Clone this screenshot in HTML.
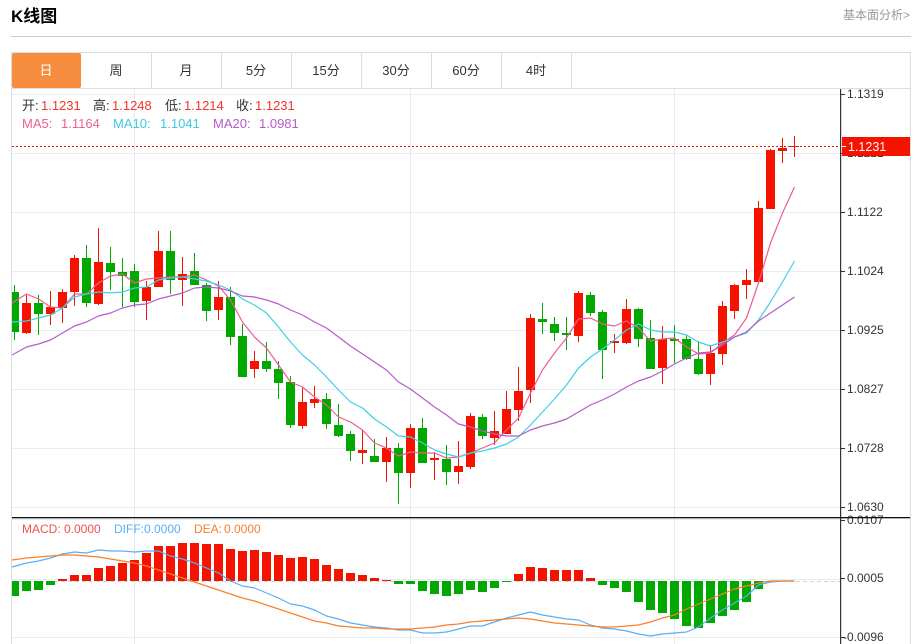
<!DOCTYPE html>
<html><head><meta charset="utf-8"><style>
html,body{margin:0;padding:0;background:#fff;width:921px;height:644px;overflow:hidden}
svg{display:block;font-family:"Liberation Sans","Noto Sans CJK SC",sans-serif}
</style></head><body>
<svg width="921" height="644" viewBox="0 0 921 644" xmlns="http://www.w3.org/2000/svg">
<defs><clipPath id="c"><rect x="12" y="89" width="828" height="555"/></clipPath></defs>
<text x="11" y="22" font-size="17" font-weight="bold" fill="#000">K线图</text>
<text x="910" y="19" font-size="12" fill="#999" text-anchor="end">基本面分析&gt;</text>
<rect x="11" y="36" width="900" height="1" fill="#ccc"/>
<g fill="none" stroke="#e6eef4">
<path d="M12 94.5H840M12 153.5H840M12 212.5H840M12 271.5H840M12 330.5H840M12 389.5H840M12 448.5H840M12 507.5H840M12 519.5H840M12 579.5H840M12 637.5H840"/>
<path d="M134.5 89V644M410.5 89V644M674.5 89V644" stroke="#e1ebf4"/>
</g>
<path d="M11.5 52V644M910.5 52V644M11 52.5H911M12 88.5H910" fill="none" stroke="#ddd"/>
<path d="M151.5 53V88M221.5 53V88M291.5 53V88M361.5 53V88M431.5 53V88M501.5 53V88M571.5 53V88" fill="none" stroke="#ddd"/>
<rect x="12" y="53" width="69" height="35" rx="2" fill="#f58c3e"/>
<g font-size="13" fill="#333" text-anchor="middle">
<text x="46" y="75" fill="#fff">日</text><text x="116" y="75">周</text><text x="186" y="75">月</text><text x="256" y="75">5分</text><text x="326" y="75">15分</text><text x="396" y="75">30分</text><text x="466" y="75">60分</text><text x="536" y="75">4时</text>
</g>
<g clip-path="url(#c)">
<g fill="none" stroke="#f51300">
<path d="M26.5 295V334M50.5 291V325M62.5 289V323M74.5 255V306M98.5 228V305M146.5 281V320M158.5 231V287M182.5 257V306M218.5 281V320M254.5 351V378M302.5 388V429M314.5 386V408M362.5 430V464M386.5 437V482M410.5 424V488M434.5 452V480M458.5 441V484M470.5 413V469M494.5 411V445M506.5 391V434M518.5 367V421M530.5 314V403M578.5 291V342M614.5 334V353M626.5 299V344M662.5 326V384M710.5 345V385M722.5 301V365M734.5 284V319M746.5 269V299M758.5 201V282M770.5 149V209M782.5 138V163M794.5 136V157"/>
</g>
<path fill="#f51300" d="M22 303h9v30h-9zM46 307h9v7h-9zM58 292h9v16h-9zM70 258h9v34h-9zM94 262h9v42h-9zM142 287h9v14h-9zM154 251h9v36h-9zM178 274h9v6h-9zM214 297h9v13h-9zM250 361h9v8h-9zM298 402h9v24h-9zM310 399h9v4h-9zM358 450h9v3h-9zM382 448h9v14h-9zM406 428h9v45h-9zM430 458h9v2h-9zM454 466h9v6h-9zM466 416h9v51h-9zM490 431h9v7h-9zM502 409h9v25h-9zM514 391h9v19h-9zM526 318h9v72h-9zM574 293h9v43h-9zM610 341h9v2h-9zM622 309h9v34h-9zM658 339h9v29h-9zM706 353h9v21h-9zM718 306h9v48h-9zM730 285h9v26h-9zM742 280h9v5h-9zM754 208h9v74h-9zM766 150h9v59h-9zM778 148h9v3h-9zM790 146h9v1h-9z"/>
<g fill="none" stroke="#00a800">
<path d="M14.5 285V340M38.5 295V335M86.5 245V307M110.5 247V290M122.5 258V307M134.5 264V307M170.5 231V294M194.5 253V285M206.5 283V321M230.5 287V345M242.5 324V377M266.5 342V372M278.5 361V399M290.5 376V428M326.5 393V429M338.5 404V437M350.5 431V461M374.5 439V462M398.5 443V504M422.5 418V463M446.5 445V485M482.5 414V439M542.5 303V334M554.5 317V341M566.5 317V350M590.5 292V316M602.5 310V379M638.5 308V347M650.5 320V369M674.5 325V363M686.5 335V360M698.5 341V375"/>
</g>
<path fill="#00a800" d="M10 292h9v40h-9zM34 303h9v11h-9zM82 258h9v45h-9zM106 263h9v9h-9zM118 272h9v4h-9zM130 271h9v31h-9zM166 251h9v29h-9zM190 271h9v14h-9zM202 285h9v26h-9zM226 297h9v40h-9zM238 336h9v41h-9zM262 361h9v8h-9zM274 369h9v14h-9zM286 382h9v43h-9zM322 399h9v25h-9zM334 425h9v11h-9zM346 434h9v17h-9zM370 456h9v6h-9zM394 448h9v25h-9zM418 428h9v35h-9zM442 459h9v13h-9zM478 417h9v19h-9zM538 319h9v3h-9zM550 324h9v9h-9zM562 333h9v2h-9zM586 295h9v18h-9zM598 312h9v38h-9zM634 309h9v30h-9zM646 338h9v31h-9zM670 339h9v2h-9zM682 339h9v20h-9zM694 359h9v15h-9z"/>
<g fill="none" stroke-width="1.2" stroke-linejoin="round">
<polyline stroke="#ef5b92" points="12,303 26.5,294 38.5,299 50.5,307 62.5,308 74.5,294 86.5,294 98.5,283 110.5,276 122.5,274 134.5,283 146.5,279 158.5,278 170.5,277 182.5,277 194.5,275 206.5,280 218.5,286 230.5,300 242.5,322 254.5,337 266.5,348 278.5,365 290.5,382 302.5,387 314.5,397 326.5,405 338.5,417 350.5,422 362.5,430 374.5,443 386.5,448 398.5,456 410.5,452 422.5,453 434.5,453 446.5,458 458.5,457 470.5,453 482.5,448 494.5,443 506.5,430 518.5,418 530.5,393 542.5,370 554.5,353 566.5,338 578.5,319 590.5,318 602.5,324 614.5,326 626.5,321 638.5,328 650.5,341 662.5,339 674.5,338 686.5,347 698.5,354 710.5,353 722.5,343 734.5,335 746.5,318 758.5,283 770.5,243 782.5,213 794.5,187"/>
<polyline stroke="#3fd0e4" points="12,322 26.5,321 38.5,318 50.5,315 62.5,308 74.5,297 86.5,294 98.5,292 110.5,293 122.5,292 134.5,288 146.5,287 158.5,280 170.5,278 182.5,277 194.5,279 206.5,281 218.5,285 230.5,290 242.5,299 254.5,305 266.5,313 278.5,327 290.5,342 302.5,355 314.5,365 326.5,377 338.5,390 350.5,402 362.5,408 374.5,419 386.5,427 398.5,436 410.5,437 422.5,443 434.5,450 446.5,454 458.5,457 470.5,453 482.5,451 494.5,448 506.5,444 518.5,437 530.5,425 542.5,412 554.5,399 566.5,385 578.5,368 590.5,357 602.5,349 614.5,340 626.5,330 638.5,324 650.5,330 662.5,332 674.5,332 686.5,335 698.5,342 710.5,346 722.5,342 734.5,337 746.5,333 758.5,320 770.5,302 782.5,282 794.5,261"/>
<polyline stroke="#b65bc9" points="12,355 26.5,347 38.5,344 50.5,340 62.5,333 74.5,326 86.5,322 98.5,316 110.5,313 122.5,308 134.5,305 146.5,304 158.5,299 170.5,296 182.5,293 194.5,288 206.5,287 218.5,288 230.5,291 242.5,296 254.5,297 266.5,300 278.5,304 290.5,310 302.5,315 314.5,322 326.5,328 338.5,337 350.5,346 362.5,354 374.5,362 386.5,370 398.5,382 410.5,389 422.5,398 434.5,407 446.5,415 458.5,424 470.5,427 482.5,431 494.5,434 506.5,436 518.5,436 530.5,430 542.5,426 554.5,423 566.5,419 578.5,412 590.5,405 602.5,400 614.5,394 626.5,387 638.5,381 650.5,377 662.5,371 674.5,364 686.5,358 698.5,353 710.5,352 722.5,345 734.5,337 746.5,332 758.5,321 770.5,313 782.5,305 794.5,297"/>
</g>
<path d="M12 581.5H840" fill="none" stroke="#b8dcee" stroke-dasharray="4 3"/>
<path fill="#f51300" d="M58 579h9v2h-9zM70 575h9v6h-9zM82 575h9v6h-9zM94 568h9v13h-9zM106 566h9v15h-9zM118 563h9v18h-9zM130 560h9v21h-9zM142 553h9v28h-9zM154 546h9v35h-9zM166 546h9v35h-9zM178 543h9v38h-9zM190 543h9v38h-9zM202 544h9v37h-9zM214 544h9v37h-9zM226 549h9v32h-9zM238 551h9v30h-9zM250 550h9v31h-9zM262 552h9v29h-9zM274 555h9v26h-9zM286 558h9v23h-9zM298 557h9v24h-9zM310 559h9v22h-9zM322 565h9v16h-9zM334 569h9v12h-9zM346 573h9v8h-9zM358 575h9v6h-9zM370 578h9v3h-9zM382 580h9v1h-9zM514 574h9v7h-9zM526 567h9v14h-9zM538 568h9v13h-9zM550 570h9v11h-9zM562 570h9v11h-9zM574 570h9v11h-9zM586 578h9v3h-9z"/>
<path fill="#00a800" d="M10 581h9v15h-9zM22 581h9v10h-9zM34 581h9v9h-9zM46 581h9v4h-9zM394 581h9v3h-9zM406 581h9v3h-9zM418 581h9v10h-9zM430 581h9v13h-9zM442 581h9v15h-9zM454 581h9v13h-9zM466 581h9v9h-9zM478 581h9v11h-9zM490 581h9v7h-9zM502 581h9v1h-9zM598 581h9v4h-9zM610 581h9v7h-9zM622 581h9v11h-9zM634 581h9v21h-9zM646 581h9v29h-9zM658 581h9v32h-9zM670 581h9v38h-9zM682 581h9v45h-9zM694 581h9v47h-9zM706 581h9v42h-9zM718 581h9v35h-9zM730 581h9v29h-9zM742 581h9v21h-9zM754 581h9v8h-9zM766 581h9v1h-9z"/>
<g fill="none" stroke-width="1.2" stroke-linejoin="round">
<polyline stroke="#5aaef5" points="12,567 26.5,563 38.5,561 50.5,558 62.5,554 74.5,552 86.5,553 98.5,550 110.5,551 122.5,551 134.5,552 146.5,551 158.5,551 170.5,556 182.5,559 194.5,563 206.5,568 218.5,573 230.5,581 242.5,586 254.5,588 266.5,593 278.5,598 290.5,604 302.5,606 314.5,610 326.5,616 338.5,619 350.5,623 362.5,625 374.5,627 386.5,628 398.5,630 410.5,630 422.5,633 434.5,633 446.5,632 458.5,629 470.5,626 482.5,626 494.5,622 506.5,618 518.5,615 530.5,612 542.5,615 554.5,617 566.5,619 578.5,620 590.5,625 602.5,628 614.5,629 626.5,631 638.5,634 650.5,636 662.5,634 674.5,633 686.5,632 698.5,627 710.5,618 722.5,610 734.5,603 746.5,596 758.5,585 770.5,582 782.5,581 794.5,581"/>
<polyline stroke="#f97f2b" points="12,560 26.5,558 38.5,557 50.5,556 62.5,555 74.5,555 86.5,556 98.5,557 110.5,559 122.5,561 134.5,563 146.5,566 158.5,570 170.5,574 182.5,578 194.5,582 206.5,586 218.5,590 230.5,594 242.5,598 254.5,601 266.5,605 278.5,609 290.5,613 302.5,617 314.5,621 326.5,623 338.5,626 350.5,627 362.5,628 374.5,628 386.5,629 398.5,629 410.5,629 422.5,628 434.5,627 446.5,625 458.5,624 470.5,622 482.5,621 494.5,620 506.5,619 518.5,618 530.5,619 542.5,621 554.5,623 566.5,624 578.5,625 590.5,626 602.5,627 614.5,627 626.5,626 638.5,625 650.5,622 662.5,618 674.5,615 686.5,609 698.5,604 710.5,599 722.5,594 734.5,589 746.5,586 758.5,583 770.5,581 782.5,581 794.5,581"/>
</g>
</g>
<path d="M12 146.5H840" fill="none" stroke="#f51300" stroke-dasharray="2 2"/>
<rect x="12" y="517" width="898" height="1.2" fill="#111"/>
<rect x="840" y="89" width="1.2" height="555" fill="#333"/>
<path d="M841 94.5h4M841 153.5h4M841 212.5h4M841 271.5h4M841 330.5h4M841 389.5h4M841 448.5h4M841 507.5h4M841 520.5h4M841 578.5h4M841 637.5h4" fill="none" stroke="#333"/>
<g font-size="12" fill="#333">
<text x="847" y="98">1.1319</text><text x="847" y="157">1.1221</text><text x="847" y="216">1.1122</text><text x="847" y="275">1.1024</text><text x="847" y="334">1.0925</text><text x="847" y="393">1.0827</text><text x="847" y="452">1.0728</text><text x="847" y="511">1.0630</text>
</g>
<rect x="841" y="518.2" width="69" height="1" fill="#fff" opacity="0"/>
<g font-size="12" fill="#333">
<text x="847" y="524">0.0107</text><text x="847" y="582">0.0005</text><text x="843" y="641">-0.0096</text>
</g>
<rect x="12" y="517" width="898" height="1.2" fill="#111"/>
<rect x="842" y="137" width="68" height="19" fill="#f51300"/>
<rect x="842" y="146" width="4" height="1" fill="#fff"/>
<text x="848" y="151" font-size="12.5" fill="#fff">1.1231</text>
<g font-size="13">
<g fill="#333"><text x="22" y="110">开:</text><text x="93" y="110">高:</text><text x="165" y="110">低:</text><text x="236" y="110">收:</text></g>
<g fill="#f5332a"><text x="41" y="110">1.1231</text><text x="112" y="110">1.1248</text><text x="184" y="110">1.1214</text><text x="255" y="110">1.1231</text></g>
<g fill="#ec5f95"><text x="22" y="128">MA5:</text><text x="61" y="128">1.1164</text></g>
<g fill="#3fc8e0"><text x="113" y="128">MA10:</text><text x="160" y="128">1.1041</text></g>
<g fill="#b65bc9"><text x="213" y="128">MA20:</text><text x="259" y="128">1.0981</text></g>
</g>
<g font-size="12">
<g fill="#f0524f"><text x="22" y="533">MACD:</text><text x="64" y="533">0.0000</text></g>
<g fill="#5aaef5"><text x="114" y="533">DIFF:</text><text x="144" y="533">0.0000</text></g>
<g fill="#f57f2e"><text x="194" y="533">DEA:</text><text x="224" y="533">0.0000</text></g>
</g>
</svg>
</body></html>
